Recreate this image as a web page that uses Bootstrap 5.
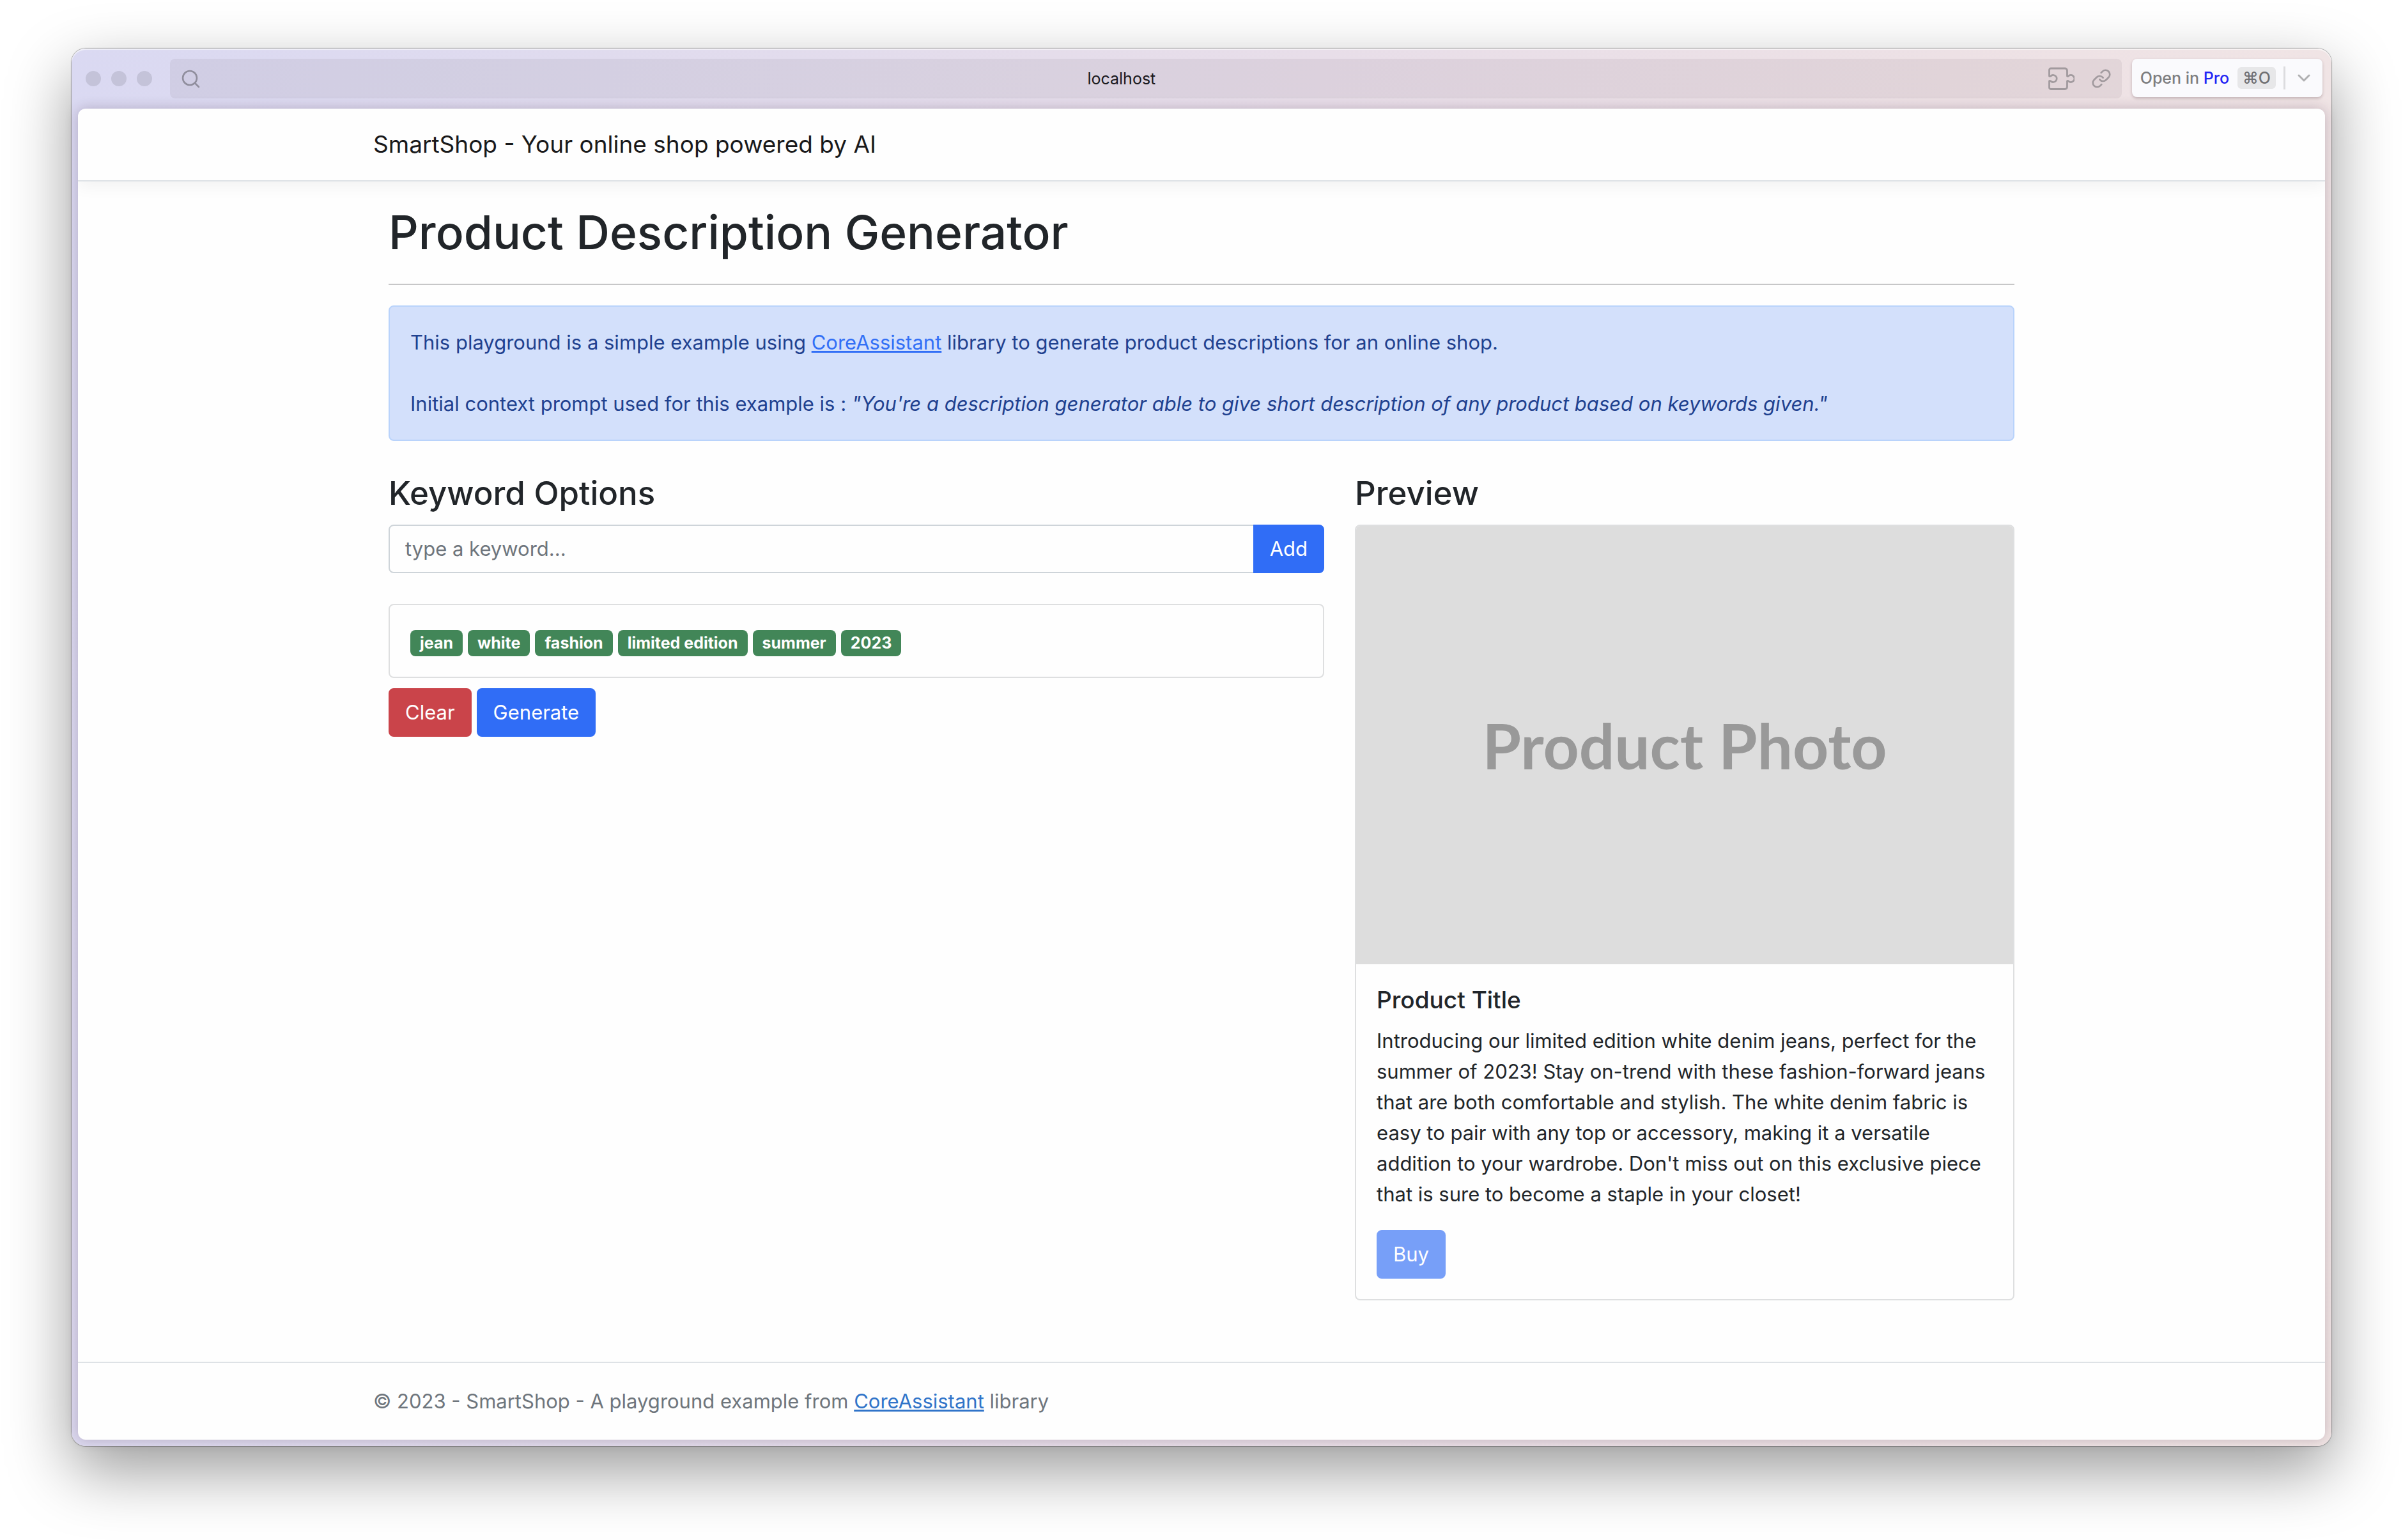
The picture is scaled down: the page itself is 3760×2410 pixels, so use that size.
<!DOCTYPE html>
<html lang="en">
<head>
<meta charset="utf-8">
<meta name="viewport" content="width=device-width, initial-scale=1">
<title>SmartShop</title>
<link href="https://cdn.jsdelivr.net/npm/bootstrap@5.3.0/dist/css/bootstrap.min.css" rel="stylesheet">
<style>
  :root {
    font-size: 32px;
    --bs-border-width: 2px;
    --ui-line: 48px;
  }
  body {
    --bs-body-font-family: Inter, "Liberation Sans", sans-serif;
    --bs-body-font-size: 31px;
    background: #fff;
    line-height: var(--ui-line);
    padding: 76px 112px 148px;
  }

  /* Browser window */
  .app-window {
    padding: 0 10px 10px;
    border-radius: 22px;
    background: linear-gradient(100deg, #dad9f2 0%, #e8dee9 50%, #ede1e5 75%, #f2e6e5 100%);
    box-shadow: inset 0 2px 1px rgba(255, 255, 255, .6), 0 0 1px 1px rgba(0, 0, 0, .3), 0 38px 100px rgba(0, 0, 0, .4);
  }
  .chrome-bar {
    padding: 16px 4px 16px 12px;
    font-size: 25px;
    line-height: 30px;
  }
  .window-dots { gap: 16px; margin-right: 28px; }
  .window-dots span {
    width: 24px;
    height: 24px;
    border-radius: 50%;
    background: #c4c3d9;
  }
  .address-bar {
    height: 62px;
    padding: 0 16px 0 18px;
    border-radius: 8px;
    background: rgba(30, 20, 40, .06);
    color: #19181c;
  }
  .address-icons { gap: 26px; margin-left: 8px; }
  .open-pro {
    height: 60px;
    margin: 0 0 2px 16px;
    padding: 0 18px 0 13px;
    border-radius: 8px;
    background: #fafafd;
    box-shadow: 0 2px 4px rgba(60, 30, 40, .25);
    color: #7d7d7f;
    font-weight: 500;
  }
  .open-pro .pro-word { color: #2323f5; }
  .open-pro .key-hint {
    height: 34px;
    margin-left: 13px;
    padding: 0 8px;
    border-radius: 6px;
    background: #e7e7e9;
    color: #707073;
    line-height: 34px;
  }
  .open-pro .split-line {
    width: 3px;
    height: 36px;
    margin: 0 18px 0 12px;
    background: #dcdcdf;
  }

  /* Page inside the window */
  .page-view {
    border-radius: 12px;
    background: #fefefe;
    box-shadow: 0 0 20px rgba(50, 20, 50, .24);
    overflow: hidden;
  }
  .container { max-width: 2640px; }
  .top-nav {
    --bs-navbar-brand-font-size: 37px;
    --bs-navbar-brand-color: #19191a;
    border-bottom: 2px solid #dee2e6;
    box-shadow: 0 8px 24px rgba(0, 0, 0, .05);
  }
  .top-nav .navbar-brand { line-height: 60px; }
  h1 { font-size: 73px; line-height: 96px; }
  h3 { font-size: 51px; line-height: 67px; }
  h5 { font-size: 37px; line-height: 48px; }
  hr { opacity: 1; border-color: #c7c7c8; }
  .alert-primary {
    --bs-alert-bg: #d3e0fb;
    --bs-alert-border-color: #b9d3fb;
    --bs-alert-color: #1f418f;
    --bs-alert-border-radius: 8px;
  }
  .alert-primary a { color: #326ff6; }
  .btn {
    --bs-btn-font-size: 31px;
    --bs-btn-line-height: 48px;
    --bs-btn-border-radius: 8px;
  }
  .btn-primary { --bs-btn-bg: #306df6; --bs-btn-border-color: #306df6; --bs-btn-disabled-bg: #306df6; --bs-btn-disabled-border-color: #306df6; }
  .btn-danger { --bs-btn-bg: #ca444a; --bs-btn-border-color: #ca444a; }
  .form-control {
    border-color: #ced4d9;
    border-radius: 8px;
    background: #fefefe;
    font-size: 31px;
    line-height: 48px;
  }
  .form-control::placeholder { color: #6e757c; }
  .card {
    --bs-card-bg: #fefefe;
    --bs-card-border-color: #dedfe0;
    --bs-card-border-radius: 8px;
    --bs-card-inner-border-radius: 6px;
  }
  .tag-list { gap: 8px; height: 48px; }
  .tag-list .badge {
    border-radius: 8px;
    background: #428658;
    font-size: 25px;
    line-height: 25px;
    padding: 8px 15px;
  }
  .photo-box {
    aspect-ratio: 1028 / 686;
    background: #ddd;
    color: #999;
    font: 700 98px/116px Lato, sans-serif;
  }
  .site-footer {
    border-top: 2px solid #dee2e6;
    color: #6e757c;
    line-height: 60px;
    padding: 30px 0;
  }
  .site-footer a { color: #3074c9; }
</style>
</head>
<body>
<div class="app-window">
  <div class="chrome-bar d-flex align-items-center">
    <div class="window-dots d-flex">
      <span></span><span></span><span></span>
    </div>
    <div class="address-bar d-flex align-items-center flex-grow-1">
      <svg width="30" height="30" viewBox="0 0 30 30" fill="none" stroke="#908e9d" stroke-width="2.6" stroke-linecap="round" aria-hidden="true"><circle cx="13" cy="14" r="11"/><path d="M21 22l6 6"/></svg>
      <div class="flex-grow-1 text-center">localhost</div>
      <div class="address-icons d-flex align-items-center">
        <svg width="42" height="36" viewBox="0 0 42 36" fill="none" stroke="#a19a9e" stroke-width="2.8" stroke-linejoin="round" aria-hidden="true"><path d="M5 2H27a3.500 3.500 0 0 1 3.500 3.500V14C31 15 32 14.500 32.500 14A5.500 5.500 0 1 1 32.500 22C32 21.500 31 21 30.500 22V31a3.500 3.500 0 0 1-3.500 3.500H5A2.500 2.500 0 0 1 2.500 32V22C3 21 4.500 21.500 5.500 22.500A5.500 5.500 0 1 0 5.500 13.500C4.500 14.500 3 15 2.500 14V4.500A2.500 2.500 0 0 1 5 2Z"/></svg>
        <svg width="32" height="32" viewBox="0 0 24 24" fill="none" stroke="#a19a9e" stroke-width="2" stroke-linecap="round" stroke-linejoin="round" aria-hidden="true"><path d="M10 13a5 5 0 0 0 7.540.540l3-3a5 5 0 0 0-7.070-7.070l-1.720 1.710"/><path d="M14 11a5 5 0 0 0-7.540-.540l-3 3a5 5 0 0 0 7.070 7.070l1.710-1.710"/></svg>
      </div>
    </div>
    <button type="button" class="open-pro border-0 d-flex align-items-center">
      <span>Open in <span class="pro-word">Pro</span></span>
      <span class="key-hint">⌘O</span>
      <span class="split-line"></span>
      <svg width="22" height="14" viewBox="0 0 22 14" fill="none" stroke="#b0b0b2" stroke-width="3" stroke-linecap="round" stroke-linejoin="round" aria-hidden="true"><path d="M3 3l8 8 8-8"/></svg>
    </button>
  </div>

  <div class="page-view">
    <header>
      <nav class="navbar top-nav mb-3">
        <div class="container">
          <a class="navbar-brand" href="#">SmartShop - Your online shop powered by AI</a>
        </div>
      </nav>
    </header>

    <div class="container">
      <main class="container-fluid">
        <h1>Product Description Generator</h1>
        <hr class="my-3">
        <div class="alert alert-primary mb-3" role="alert">
          This playground is a simple example using <a href="#">CoreAssistant</a> library to generate product descriptions for an online shop.
          <br><br>
          Initial context prompt used for this example is : <i>"You're a description generator able to give short description of any product based on keywords given."</i>
        </div>
        <div class="row pt-2">
          <div class="col-7">
            <h3><label for="keyword">Keyword Options</label></h3>
            <div class="input-group mb-4">
              <input type="text" id="keyword" class="form-control" placeholder="type a keyword...">
              <button type="button" class="btn btn-primary">Add</button>
            </div>
            <div class="card mb-2">
              <div class="card-body">
                <div class="tag-list d-flex align-items-end">
                  <span class="badge">jean</span>
                  <span class="badge">white</span>
                  <span class="badge">fashion</span>
                  <span class="badge">limited edition</span>
                  <span class="badge">summer</span>
                  <span class="badge">2023</span>
                </div>
              </div>
            </div>
            <div class="d-flex gap-1">
              <button type="button" class="btn btn-danger">Clear</button>
              <button type="button" class="btn btn-primary">Generate</button>
            </div>
          </div>
          <div class="col-5">
            <h3>Preview</h3>
            <div class="card">
              <div class="photo-box card-img-top d-flex align-items-center justify-content-center">Product Photo</div>
              <div class="card-body">
                <h5 class="card-title">Product Title</h5>
                <p class="card-text mb-3">Introducing our limited edition white denim jeans, perfect for the summer of 2023! Stay on-trend with these fashion-forward jeans that are both comfortable and stylish. The white denim fabric is easy to pair with any top or accessory, making it a versatile addition to your wardrobe. Don't miss out on this exclusive piece that is sure to become a staple in your closet!</p>
                <button type="button" class="btn btn-primary" disabled>Buy</button>
              </div>
            </div>
          </div>
        </div>
      </main>
    </div>

    <footer class="site-footer mt-5">
      <div class="container">
        © 2023 - SmartShop - A playground example from <a href="#">CoreAssistant</a> library
      </div>
    </footer>
  </div>
</div>
<script src="https://cdn.jsdelivr.net/npm/bootstrap@5.3.0/dist/js/bootstrap.bundle.min.js"></script>
</body>
</html>
